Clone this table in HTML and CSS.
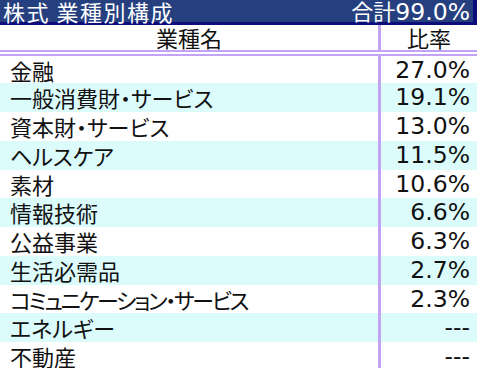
FILE: index.html
```html
<!DOCTYPE html>
<html lang="ja">
<head>
<meta charset="utf-8">
<link rel="stylesheet" href="styles.css">
</head>
<body>
<div class="panel">
  <div class="title">
    <span class="title-text">株式 業種別構成</span>
    <span class="title-total">合計<span class="num">99.0%</span></span>
  </div>
  <div class="row head">
    <div class="name">業種名</div>
    <div class="val">比率</div>
  </div>
  <div class="row first"><div class="name">金融</div><div class="val num">27.0%</div></div>
  <div class="row alt"><div class="name">一般消費財・サービス</div><div class="val num">19.1%</div></div>
  <div class="row"><div class="name">資本財・サービス</div><div class="val num">13.0%</div></div>
  <div class="row alt"><div class="name">ヘルスケア</div><div class="val num">11.5%</div></div>
  <div class="row"><div class="name">素材</div><div class="val num">10.6%</div></div>
  <div class="row alt"><div class="name">情報技術</div><div class="val num">6.6%</div></div>
  <div class="row"><div class="name">公益事業</div><div class="val num">6.3%</div></div>
  <div class="row alt"><div class="name">生活必需品</div><div class="val num">2.7%</div></div>
  <div class="row"><div class="name tight">コミュニケーション・サービス</div><div class="val num">2.3%</div></div>
  <div class="row alt"><div class="name">エネルギー</div><div class="val num">---</div></div>
  <div class="row"><div class="name">不動産</div><div class="val num">---</div></div>
</div>
</body>
</html>
```
FILE: styles.css
```css
html, body {
  margin: 0;
  padding: 0;
  background: #ffffff;
  overflow: hidden;
}
body {
  font-family: "Noto Sans CJK JP", "Noto Sans", sans-serif;
  font-feature-settings: "palt";
  color: #111111;
}
.num {
  font-family: "DejaVu Sans", "Noto Sans", sans-serif;
  font-feature-settings: normal;
  font-size: 23.5px;
}
.panel {
  width: 477px;
}
.title {
  display: flex;
  justify-content: space-between;
  align-items: center;
  height: 22px;
  background: #26407f;
  border-bottom: 3px solid #0c0c7a;
  border-right: 4px solid #0c0c7a;
  color: #ffffff;
  font-size: 22px;
  line-height: 22px;
  padding-left: 3px;
  padding-right: 3px;
}
.title-text {
  letter-spacing: 1.5px;
}
.row {
  display: flex;
  height: 28.75px;
  font-size: 22px;
  line-height: 28px;
}
.row.alt {
  background: #dcfcfc;
}
.row.head {
  height: 25px;
  line-height: 25px;
  border-bottom: 6px double #c3a3f3;
}
.row.first {
  height: 27.3px;
}
.name {
  width: 378px;
  padding-left: 10px;
  box-sizing: border-box;
  white-space: nowrap;
}
.name.tight {
  letter-spacing: -2.3px;
}
.val {
  flex: 1;
  border-left: 3px solid #c3a3f3;
  text-align: right;
  padding-right: 7px;
  white-space: nowrap;
}
.head .name {
  text-align: center;
  padding-left: 0;
}
.head .val {
  text-align: center;
  padding-right: 0;
}
```
